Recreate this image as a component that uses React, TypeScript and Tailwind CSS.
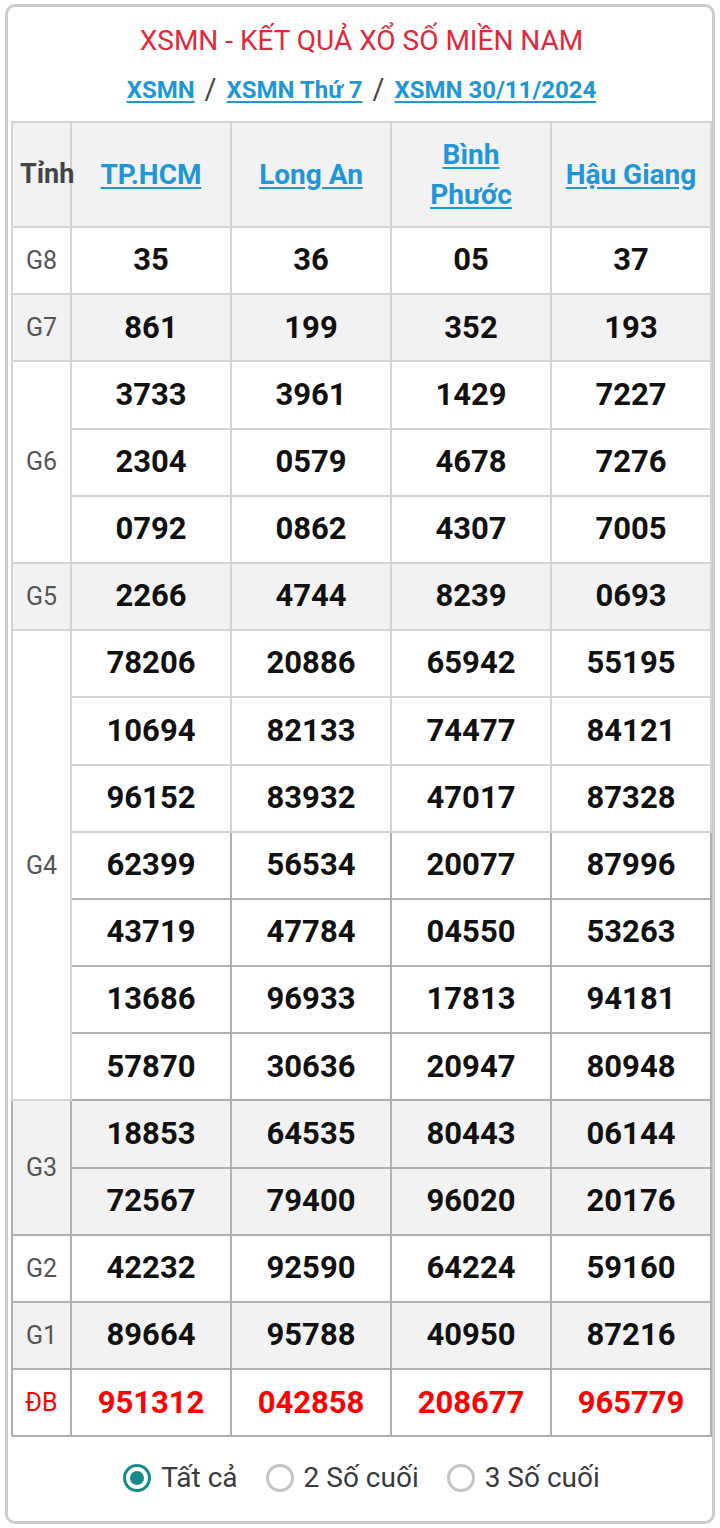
import React from "react";

type Group = { label: string; rows: string[][]; grey: boolean; red?: boolean };

const groups: Group[] = [
  { label: "G8", grey: false, rows: [["35", "36", "05", "37"]] },
  { label: "G7", grey: true, rows: [["861", "199", "352", "193"]] },
  {
    label: "G6",
    grey: false,
    rows: [
      ["3733", "3961", "1429", "7227"],
      ["2304", "0579", "4678", "7276"],
      ["0792", "0862", "4307", "7005"],
    ],
  },
  { label: "G5", grey: true, rows: [["2266", "4744", "8239", "0693"]] },
  {
    label: "G4",
    grey: false,
    rows: [
      ["78206", "20886", "65942", "55195"],
      ["10694", "82133", "74477", "84121"],
      ["96152", "83932", "47017", "87328"],
      ["62399", "56534", "20077", "87996"],
      ["43719", "47784", "04550", "53263"],
      ["13686", "96933", "17813", "94181"],
      ["57870", "30636", "20947", "80948"],
    ],
  },
  {
    label: "G3",
    grey: true,
    rows: [
      ["18853", "64535", "80443", "06144"],
      ["72567", "79400", "96020", "20176"],
    ],
  },
  { label: "G2", grey: false, rows: [["42232", "92590", "64224", "59160"]] },
  { label: "G1", grey: true, rows: [["89664", "95788", "40950", "87216"]] },
  { label: "ĐB", grey: false, red: true, rows: [["951312", "042858", "208677", "965779"]] },
];

const font = { fontFamily: "Roboto, 'Noto Sans', sans-serif" };

function Radio({ checked, label }: { checked?: boolean; label: string }) {
  return (
    <label className="flex items-center gap-[10px]">
      {checked ? (
        <span className="w-[28px] h-[28px] rounded-full border-[3px] border-[#168a86] flex items-center justify-center">
          <span className="w-[14px] h-[14px] rounded-full bg-[#168a86]" />
        </span>
      ) : (
        <span className="w-[28px] h-[28px] rounded-full border-[3px] border-[#c4c4c4]" />
      )}
      <span className="text-[28px] text-[#3a3a3a]">{label}</span>
    </label>
  );
}

const darkFrom = (gi: number, i: number) => {
  const label = groups[gi].label;
  if (label === "G4") return i >= 3;
  return ["G3", "G2", "G1", "ĐB"].includes(label);
};

export default function App() {
  return (
    <div className="bg-white w-[720px] h-[1528px] pt-[4px] px-[5px]" style={font}>
      <div className="border-[3px] border-[#cccccc] rounded-[10px] pl-[3px] pt-[2px] pb-[2px] bg-white">
        <div className="h-[112px] flex flex-col items-center">
          <div className="text-[28px] text-[#e2283b] leading-none mt-[18px]">
            XSMN - KẾT QUẢ XỔ SỐ MIỀN NAM
          </div>
          <div className="flex items-center gap-[10px] mt-[20px] text-[24px] font-bold leading-none">
            <a className="text-[#1f96d8] underline underline-offset-[3px]">XSMN</a>
            <span className="text-[#444] text-[29px] font-normal">/</span>
            <a className="text-[#1f96d8] underline underline-offset-[3px]">XSMN Thứ 7</a>
            <span className="text-[#444] text-[29px] font-normal">/</span>
            <a className="text-[#1f96d8] underline underline-offset-[3px]">XSMN 30/11/2024</a>
          </div>
        </div>
        <table className="w-full table-fixed border-collapse">
          <colgroup>
            <col className="w-[59px]" />
            <col />
            <col />
            <col />
            <col />
          </colgroup>
          <thead>
            <tr className="bg-[#f2f2f2] h-[105px]">
              <th className="border-2 border-[#d4d4d4] text-[27px] font-bold text-[#444] p-0 text-left pl-[7px]">
                Tỉnh
              </th>
              {[["TP.HCM"], ["Long An"], ["Bình", "Phước"], ["Hậu Giang"]].map((n) => (
                <th
                  key={n.join(" ")}
                  className="border-2 border-[#d4d4d4] text-[28px] font-bold text-[#1f96d8] leading-[40px] px-0 whitespace-nowrap"
                >
                  {n.map((part, k) => (
                    <React.Fragment key={part}>
                      {k > 0 && <br />}
                      <span className="underline underline-offset-[3px]">{part}</span>
                    </React.Fragment>
                  ))}
                </th>
              ))}
            </tr>
          </thead>
          <tbody>
            {groups.map((g, gi) =>
              g.rows.map((r, i) => {
                const dark = darkFrom(gi, i);
                const bc = dark ? "border-[#b0b0b0]" : "border-[#d4d4d4]";
                const lbc = ["G3", "G2", "G1", "ĐB"].includes(g.label) ? "border-[#b0b0b0]" : "border-[#d4d4d4]";
                return (
                  <tr key={g.label + i} className={`h-[67.2px] ${g.grey ? "bg-[#f2f2f2]" : "bg-white"}`}>
                    {i === 0 && (
                      <td
                        rowSpan={g.rows.length}
                        className={`border-2 ${lbc} text-center text-[25px] ${
                          g.red ? "text-[#ff0000]" : "text-[#555]"
                        }`}
                      >
                        {g.label}
                      </td>
                    )}
                    {r.map((n, j) => (
                      <td
                        key={j}
                        className={`border-2 ${bc} text-center text-[31px] font-bold ${
                          g.red ? "text-[#ff0000]" : "text-[#111]"
                        }`}
                      >
                        {n}
                      </td>
                    ))}
                  </tr>
                );
              })
            )}
          </tbody>
        </table>
        <div className="h-[82px] flex items-center justify-center gap-[28px]">
          <Radio checked label="Tất cả" />
          <Radio label="2 Số cuối" />
          <Radio label="3 Số cuối" />
        </div>
      </div>
    </div>
  );
}
